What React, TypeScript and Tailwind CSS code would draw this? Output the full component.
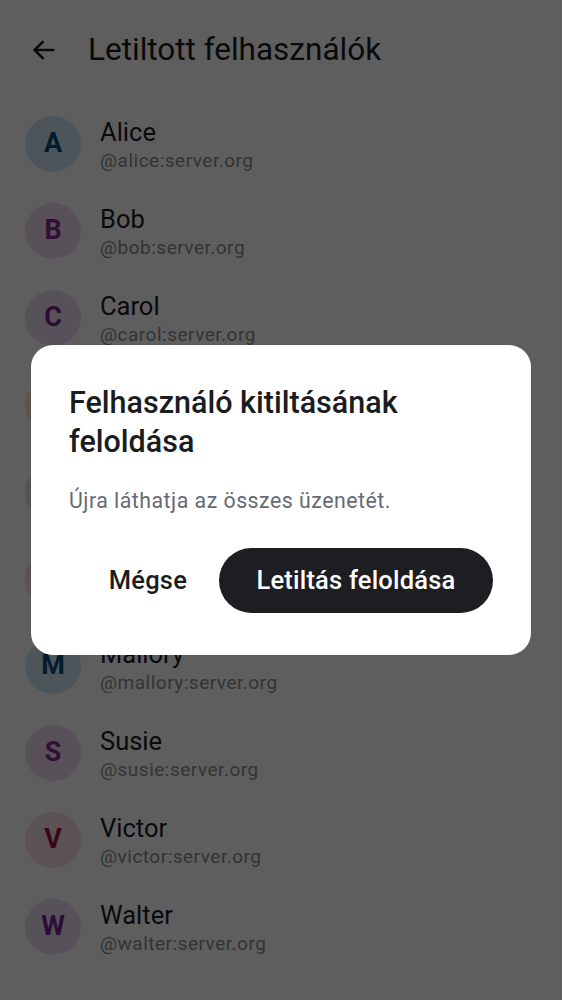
import React from "react";

type User = { name: string; handle: string; bg: string; fg: string };

const users: User[] = [
  { name: "Alice", handle: "@alice:server.org", bg: "bg-[#cfe6f5]", fg: "text-[#0d4a7a]" },
  { name: "Bob", handle: "@bob:server.org", bg: "bg-[#f1dcf0]", fg: "text-[#8a2a98]" },
  { name: "Carol", handle: "@carol:server.org", bg: "bg-[#eddcf3]", fg: "text-[#7a2596]" },
  { name: "Dan", handle: "@dan:server.org", bg: "bg-[#f6e0d0]", fg: "text-[#9a4a10]" },
  { name: "Eve", handle: "@eve:server.org", bg: "bg-[#dde2f2]", fg: "text-[#2a4a8a]" },
  { name: "Frank", handle: "@frank:server.org", bg: "bg-[#f5dede]", fg: "text-[#9a2a2a]" },
  { name: "Mallory", handle: "@mallory:server.org", bg: "bg-[#cfe6f5]", fg: "text-[#0d4a7a]" },
  { name: "Susie", handle: "@susie:server.org", bg: "bg-[#f1dcf0]", fg: "text-[#8a2a98]" },
  { name: "Victor", handle: "@victor:server.org", bg: "bg-[#f6dde3]", fg: "text-[#9c1848]" },
  { name: "Walter", handle: "@walter:server.org", bg: "bg-[#eddcf3]", fg: "text-[#7a2596]" },
];

export default function App() {
  return (
    <div className="relative h-[1000px] w-[562px] overflow-hidden bg-white font-['Roboto',sans-serif]">
      <header className="flex h-[100px] items-center gap-[30px] pl-[30px]">
        <svg width="28" height="28" viewBox="0 0 24 24" fill="none" stroke="#1b1b1f" strokeWidth="2.2" strokeLinecap="round" strokeLinejoin="round">
          <path d="M20 12H4" />
          <path d="M11 5l-7 7 7 7" />
        </svg>
        <h1 className="text-[31.5px] leading-none text-[#1b1b1f]">Letiltott felhasználók</h1>
      </header>
      <ul className="flex flex-col">
        {users.map((u) => (
          <li key={u.name} className="flex h-[87px] items-center gap-[19px] pl-[25px]">
            <div className={`flex h-[56px] w-[56px] shrink-0 items-center justify-center rounded-full ${u.bg}`}>
              <span className={`text-[27px] font-bold ${u.fg}`}>{u.name[0]}</span>
            </div>
            <div className="flex flex-col pt-[4px]">
              <span className="text-[25.5px] leading-[30px] text-[#1b1b1f]">{u.name}</span>
              <span className="text-[19px] leading-[28px] tracking-[0.5px] text-[#8a8d92]">{u.handle}</span>
            </div>
          </li>
        ))}
      </ul>

      <div className="absolute inset-0 bg-black/[0.63]" />

      <div className="absolute left-[31px] top-[345px] flex h-[310px] w-[500px] flex-col rounded-[22px] bg-white px-[38px] pt-[38px]">
        <h2 className="text-[30.5px] font-medium leading-[39px] text-[#1b1c1f]">
          Felhasználó kitiltásának feloldása
        </h2>
        <p className="mt-[26px] text-[21.3px] leading-[28px] tracking-[0.5px] text-[#656b75]">Újra láthatja az összes üzenetét.</p>
        <div className="mt-[33px] flex items-center justify-end gap-[32px]">
          <button className="text-[25.5px] font-medium tracking-[0.2px] text-[#1b1c1f]">Mégse</button>
          <button className="h-[65px] w-[274px] rounded-full bg-[#1d1e22] text-[25.5px] font-medium tracking-[0.2px] text-white">
            Letiltás feloldása
          </button>
        </div>
      </div>
    </div>
  );
}
